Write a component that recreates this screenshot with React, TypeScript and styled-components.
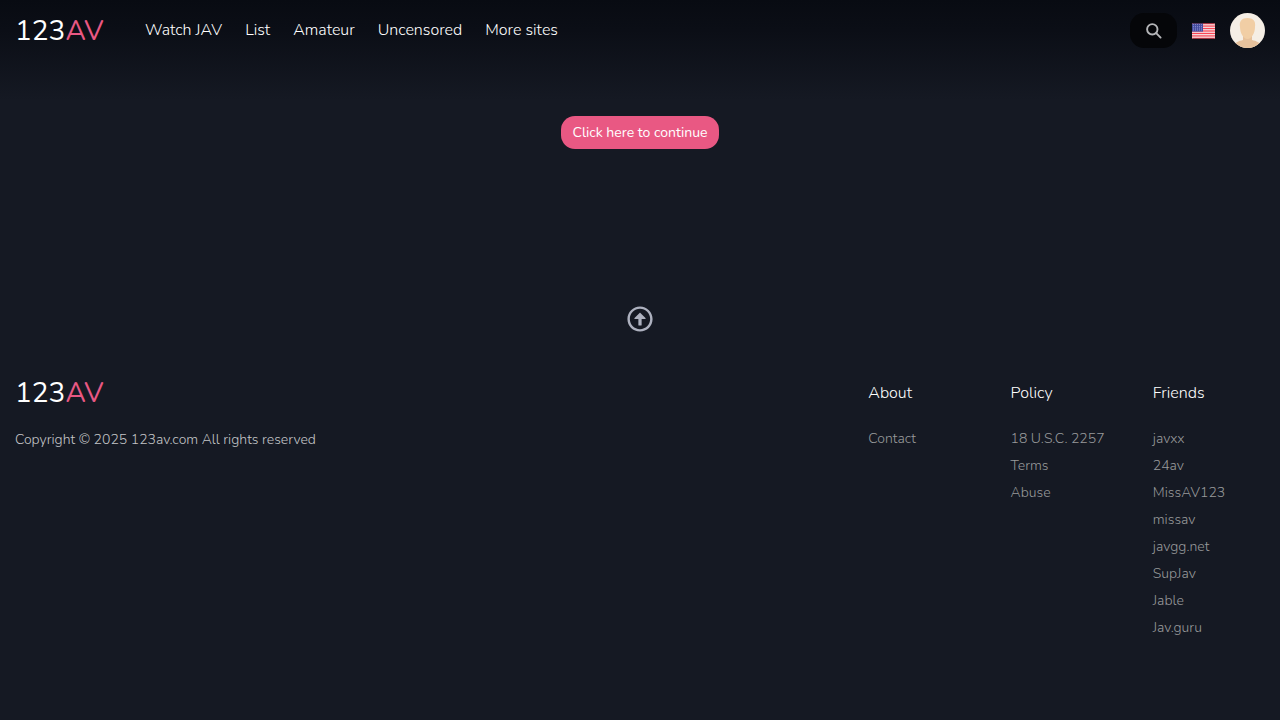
import React from "react";
import styled, { createGlobalStyle } from "styled-components";
import { FaRegArrowAltCircleUp } from "react-icons/fa";

const GlobalStyle = createGlobalStyle`
  *, *::before, *::after { box-sizing: border-box; }
  html { background: #151923; }
  body {
    margin: 0;
    color: #b5b6b9;
    font-family: Nunito, Lato, "Open Sans", sans-serif;
    font-size: 14px;
    font-weight: 300;
    line-height: 27px;
  }
  a { color: inherit; text-decoration: none; }
  ul { margin: 0; padding: 0; list-style: none; }
`;

const Page = styled.div`
  min-height: 100vh;
  background: linear-gradient(#080b12, #0b0e16 30px, #151923 100px);
`;

const Header = styled.header`
  display: flex;
  align-items: center;
  height: 61px;
  padding: 0 15px;
`;

const Logo = styled.a`
  display: block;
  width: 90px;
  color: #fff;
  font-size: 28px;
  font-weight: 400;
  line-height: 40px;
`;

const LogoAccent = styled.span`
  color: #e95883;
`;

const Nav = styled.nav`
  display: flex;
  flex: 1;
  gap: 23px;
  margin-left: 40px;
  color: #fff;
  font-size: 16px;
`;

const Tools = styled.div`
  display: flex;
  align-items: center;
  gap: 15px;
`;

const ToolButton = styled.button`
  display: flex;
  align-items: center;
  justify-content: center;
  padding: 0;
  border: 0;
  background: none;
  cursor: pointer;
`;

const SearchButton = styled(ToolButton)`
  width: 47px;
  height: 35px;
  border-radius: 14px;
  background: #050609;
  color: #b5b6b9;
`;

const Main = styled.main`
  display: flex;
  flex-direction: column;
  align-items: center;
  padding-top: 55px;
`;

const ContinueButton = styled.button`
  height: 33px;
  padding: 0 11px;
  border: 0;
  border-radius: 14px;
  background: #e95883;
  color: #fff;
  font: inherit;
  font-weight: 400;
  cursor: pointer;
`;

const TopButton = styled(ToolButton)`
  margin-top: 157px;
  color: #adb1bf;
`;

const Footer = styled.footer`
  display: grid;
  grid-template-columns: 6fr 1fr 1fr 1fr;
  padding: 41px 0 48px;
`;

const Column = styled.section`
  min-width: 0;
  padding-left: 15px;
  color: #98999b;
`;

const Heading = styled.h2`
  margin: 0 0 12px;
  color: #fff;
  font-size: 16px;
  font-weight: 300;
  line-height: 40px;
`;

const Copyright = styled.p`
  margin: 13px 0 0;
  color: #c4c5c8;
`;

const navItems = ["Watch JAV", "List", "Amateur", "Uncensored", "More sites"];

const columns = [
  { title: "About", links: ["Contact"] },
  { title: "Policy", links: ["18 U.S.C. 2257", "Terms", "Abuse"] },
  {
    title: "Friends",
    links: ["javxx", "24av", "MissAV123", "missav", "javgg.net", "SupJav", "Jable", "Jav.guru"],
  },
];

function Brand() {
  return (
    <Logo href="#">
      123<LogoAccent>AV</LogoAccent>
    </Logo>
  );
}

function SearchIcon() {
  return (
    <svg width="16" height="16" viewBox="0 0 16 16" fill="none" stroke="currentColor" strokeWidth="1.9" strokeLinecap="round" aria-hidden="true">
      <circle cx="6.3" cy="6.3" r="5.2" />
      <path d="M10.2 10.2 14.6 14.6" />
    </svg>
  );
}

function FlagIcon() {
  return (
    <svg width="23" height="16" viewBox="0 0 23 16" aria-hidden="true">
      <clipPath id="flag"><rect width="23" height="16" rx="1.5" /></clipPath>
      <g clipPath="url(#flag)">
        <rect width="23" height="16" fill="#f5e4e7" />
        {[0, 1, 2, 3, 4, 5, 6].map((i) => (
          <rect key={i} y={i * 2.46} width="23" height="1.23" fill="#fa4654" />
        ))}
        <rect width="11" height="8.6" fill="#444b9e" />
        {[1.5, 3.3, 5.1, 6.9].map((y) =>
          [1.5, 3.5, 5.5, 7.5, 9.5].map((x) => (
            <circle key={`${x}-${y}`} cx={x} cy={y} r="0.6" fill="#8a8fd0" />
          ))
        )}
        <path d="M0 .5H23M0 15.5H23" stroke="#5c2733" strokeOpacity=".55" />
      </g>
    </svg>
  );
}

function AvatarIcon() {
  return (
    <svg width="35" height="35" viewBox="0 0 35 35" aria-hidden="true">
      <clipPath id="avatar"><circle cx="17.5" cy="17.5" r="17.5" /></clipPath>
      <g clipPath="url(#avatar)">
        <rect width="35" height="35" fill="#f5eee5" />
        <path d="M3 35C4 29 9 28 13 27V22H22V27C26 28 31 29 32 35Z" fill="#e6c19c" />
        <path d="M10 14C9 8 12 5 17.5 5S26 8 25 14C25 20 21.5 26 17.5 26S10 20 10 14Z" fill="#f1cea5" />
      </g>
    </svg>
  );
}

export default function App() {
  return (
    <Page>
      <GlobalStyle />
      <Header>
        <Brand />
        <Nav aria-label="Main">
          {navItems.map((item) => (
            <a key={item} href="#">{item}</a>
          ))}
        </Nav>
        <Tools>
          <SearchButton aria-label="Search"><SearchIcon /></SearchButton>
          <ToolButton aria-label="Language"><FlagIcon /></ToolButton>
          <ToolButton aria-label="Account"><AvatarIcon /></ToolButton>
        </Tools>
      </Header>
      <Main>
        <ContinueButton>Click here to continue</ContinueButton>
        <TopButton aria-label="Back to top"><FaRegArrowAltCircleUp size={26} /></TopButton>
      </Main>
      <Footer>
        <Column>
          <Brand />
          <Copyright>Copyright © 2025 123av.com All rights reserved</Copyright>
        </Column>
        {columns.map(({ title, links }) => (
          <Column key={title}>
            <Heading>{title}</Heading>
            <ul>
              {links.map((link) => (
                <li key={link}><a href="#">{link}</a></li>
              ))}
            </ul>
          </Column>
        ))}
      </Footer>
    </Page>
  );
}
